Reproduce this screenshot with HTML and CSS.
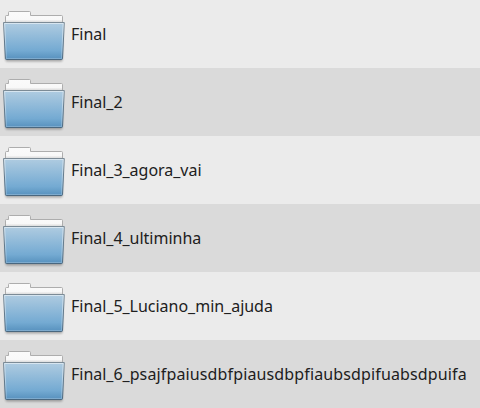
FILE: index.html
```html
<!DOCTYPE html>
<html lang="pt-BR">
<head>
<meta charset="utf-8">
<title>Final</title>
<link rel="stylesheet" href="styles.css">
</head>
<body>
<svg class="defs" width="0" height="0" aria-hidden="true">
  <defs>
    <linearGradient id="front" x1="0" y1="0" x2="0" y2="1">
      <stop offset="0" stop-color="#b0cce1"/>
      <stop offset="0.76" stop-color="#74aad2"/>
      <stop offset="1" stop-color="#5690bd"/>
    </linearGradient>
    <linearGradient id="shade" x1="0" y1="0" x2="0" y2="1">
      <stop offset="0" stop-color="#fbfbfb"/>
      <stop offset="0.55" stop-color="#f8f8f8"/>
      <stop offset="0.8" stop-color="#d0d0d0"/>
    </linearGradient>
    <linearGradient id="edge" x1="0" y1="0" x2="0" y2="1">
      <stop offset="0" stop-color="#7c8b96"/>
      <stop offset="1" stop-color="#49677f"/>
    </linearGradient>
    <linearGradient id="glow" x1="0" y1="0" x2="0" y2="1">
      <stop offset="0" stop-color="#fff" stop-opacity=".5"/>
      <stop offset="1" stop-color="#fff" stop-opacity=".22"/>
    </linearGradient>
    <filter id="soft" x="-10%" y="-10%" width="120%" height="130%"><feGaussianBlur stdDeviation="0.9"/></filter>
    <symbol id="folder" viewBox="0 0 68 68">
      <path d="M5 27H63L62.500 60Q62.500 61.500 61 61.500H7Q5.500 61.500 5.500 60Z" fill="#000" opacity=".3" filter="url(#soft)"/>
      <path d="M5.500 26V16.500Q5.500 15.500 6.500 15.500H8.500V12.500Q8.500 11.500 9.500 11.500H29.500Q30.500 11.500 30.500 12.500V15.500H61.500Q62.500 15.500 62.500 16.500V26Z" fill="url(#shade)" stroke="#adadad"/>
      <path d="M3.500 22.500H64.300L62.500 58.500Q62.400 59.500 61.500 59.500H6.500Q5.500 59.500 5.400 58.500Z" fill="url(#front)" stroke="url(#edge)"/>
      <path d="M4.600 23.500H63.200L61.500 58.500H6.400Z" fill="none" stroke="url(#glow)"/>
    </symbol>
  </defs>
</svg>
<ul class="files">
  <li class="file"><svg class="icon"><use href="#folder"/></svg><span class="name">Final</span></li>
  <li class="file"><svg class="icon"><use href="#folder"/></svg><span class="name">Final_2</span></li>
  <li class="file"><svg class="icon"><use href="#folder"/></svg><span class="name">Final_3_agora_vai</span></li>
  <li class="file"><svg class="icon"><use href="#folder"/></svg><span class="name">Final_4_ultiminha</span></li>
  <li class="file"><svg class="icon"><use href="#folder"/></svg><span class="name">Final_5_Luciano_min_ajuda</span></li>
  <li class="file"><svg class="icon"><use href="#folder"/></svg><span class="name">Final_6_<span class="wide">psajfpaiusdbfpiausdbpfiaubsdpifuabsdpuifa</span></span></li>
</ul>
</body>
</html>
```
FILE: styles.css
```css
body {
  margin: 0;
  background: #ebebeb;
  color: #202020;
  font: 16px/22px "Noto Sans", sans-serif;
}
.defs {
  display: block;
}
.files {
  margin: 0;
  padding: 0;
  list-style: none;
}
.file {
  display: flex;
  align-items: center;
  gap: 3px;
  height: 68px;
  background: #ebebeb;
}
.file:nth-child(even) {
  background: #dadada;
}
.icon {
  flex: none;
  width: 68px;
  height: 68px;
}
.name {
  white-space: nowrap;
  letter-spacing: -0.02px;
}
.wide {
  letter-spacing: 0.135px;
}
```
